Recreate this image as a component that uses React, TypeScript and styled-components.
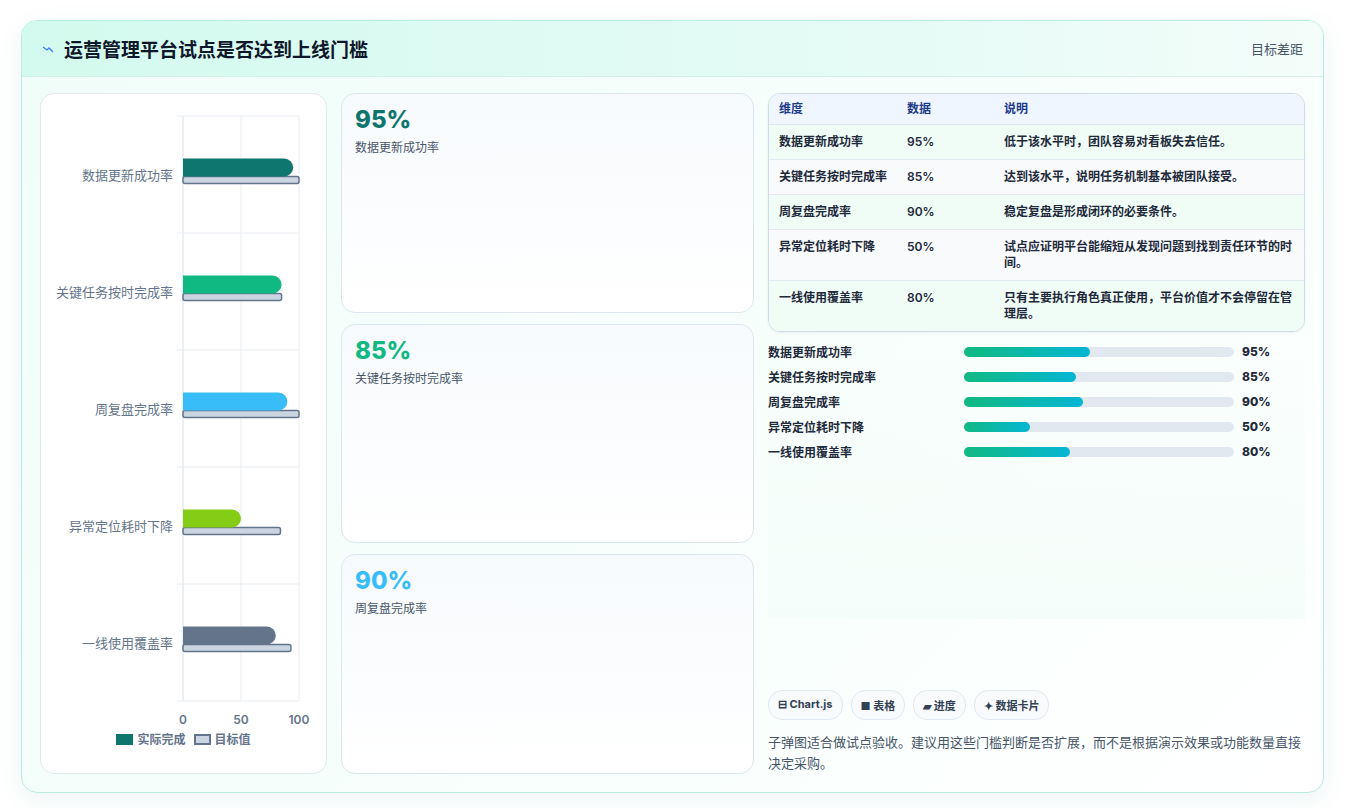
import React from 'react';
import styled, { createGlobalStyle } from 'styled-components';

const GlobalStyle = createGlobalStyle`
  body {
    margin: 0;
    background: #ffffff;
    font-family: Inter, "Noto Sans CJK SC", sans-serif;
  }
`;

interface Metric {
  name: string;
  value: number;
  target: number;
  color: string;
  note: string;
}

const metrics: Metric[] = [
  { name: '数据更新成功率', value: 95, target: 100, color: '#0f766e', note: '低于该水平时，团队容易对看板失去信任。' },
  { name: '关键任务按时完成率', value: 85, target: 85, color: '#10b981', note: '达到该水平，说明任务机制基本被团队接受。' },
  { name: '周复盘完成率', value: 90, target: 100, color: '#38bdf8', note: '稳定复盘是形成闭环的必要条件。' },
  { name: '异常定位耗时下降', value: 50, target: 84, color: '#84cc16', note: '试点应证明平台能缩短从发现问题到找到责任环节的时间。' },
  { name: '一线使用覆盖率', value: 80, target: 93, color: '#64748b', note: '只有主要执行角色真正使用，平台价值才不会停留在管理层。' },
];

const Page = styled.div`
  padding: 20px 21px 17px 21px;
`;

const Frame = styled.div`
  border: 1px solid #b9ece0;
  border-radius: 16px;
  background: linear-gradient(135deg, #effdf8 0%, #f8fffc 60%, #ffffff 100%);
  box-shadow: 0 6px 24px rgba(15, 118, 110, 0.08);
  overflow: hidden;
`;

const Header = styled.div`
  height: 55px;
  display: flex;
  align-items: center;
  justify-content: space-between;
  padding: 0 20px;
  background: linear-gradient(90deg, #d3faee, #e4fbf5 60%, #f3fdfa);
  border-bottom: 1px solid #d3efe7;
`;

const Title = styled.h1`
  margin: 0;
  display: flex;
  align-items: center;
  gap: 10px;
  font-size: 19px;
  font-weight: 700;
  color: #0f172a;
`;

const HeaderLink = styled.span`
  font-size: 13px;
  color: #475569;
`;

const Body = styled.div`
  display: grid;
  grid-template-columns: 287px 413px 1fr;
  gap: 14px;
  padding: 16px 18px 18px 18px;
  height: 681px;
`;

const ChartPanel = styled.div`
  background: #fff;
  border: 1px solid #e2e8f0;
  border-radius: 14px;
  display: flex;
  flex-direction: column;
  align-items: center;
`;

const Legend = styled.div`
  display: flex;
  gap: 8px;
  align-items: center;
  font-size: 12px;
  font-weight: 600;
  color: #64748b;
`;

const Swatch = styled.span<{ $fill: string; $border: string }>`
  width: 17px;
  height: 11px;
  background: ${({ $fill }) => $fill};
  border: 2px solid ${({ $border }) => $border};
  box-sizing: border-box;
  margin-right: 4px;
  display: inline-block;
  vertical-align: -1px;
`;

const Cards = styled.div`
  display: grid;
  grid-template-rows: repeat(3, 1fr);
  gap: 11px;
`;

const Card = styled.div`
  border: 1px solid #dbe7ef;
  border-radius: 14px;
  background: linear-gradient(180deg, #f7fafd, #ffffff);
  padding: 12px 13px;
`;

const BigNum = styled.div<{ $color: string }>`
  font-size: 24px;
  font-weight: 800;
  color: ${({ $color }) => $color};
  line-height: 28px;
`;

const CardLabel = styled.div`
  font-size: 12px;
  color: #475569;
  margin-top: 4px;
`;

const Right = styled.div`
  display: flex;
  flex-direction: column;
`;

const Table = styled.div`
  border: 1px solid #cfdbe6;
  border-radius: 12px;
  overflow: hidden;
  font-size: 12px;
  box-shadow: 0 1px 3px rgba(15, 23, 42, 0.06);
`;

const Row = styled.div<{ $bg: string; $head?: boolean }>`
  display: grid;
  grid-template-columns: 128px 97px 1fr;
  padding: ${({ $head }) => ($head ? '7px 10px' : '9px 10px')};
  background: ${({ $bg }) => $bg};
  border-bottom: 1px solid #e2e8f0;
  line-height: 16px;
  font-weight: ${({ $head }) => ($head ? 700 : 600)};
  color: ${({ $head }) => ($head ? '#1e3a8a' : '#1e293b')};
  &:last-child { border-bottom: none; }
`;

const Bars = styled.div`
  display: flex;
  flex-direction: column;
  gap: 9px;
  margin-top: 11px;
  padding-bottom: 160px;
  background: linear-gradient(180deg, #ffffff00, #f4fdf9);
`;

const BarRow = styled.div`
  display: grid;
  grid-template-columns: 196px 278px 1fr;
  align-items: center;
  font-size: 12px;
  font-weight: 600;
  color: #1e293b;
  height: 16px;
`;

const Track = styled.div`
  height: 10px;
  border-radius: 5px;
  background: #e2e8f0;
  margin-right: 8px;
`;

const Fill = styled.div`
  height: 100%;
  border-radius: 5px;
  background: linear-gradient(90deg, #10b981, #06b6d4);
`;

const Pct = styled.span`
  font-weight: 800;
`;

const Footer = styled.div`
  margin-top: auto;
`;

const Chips = styled.div`
  display: flex;
  gap: 8px;
`;

const Chip = styled.span`
  font-size: 11px;
  font-weight: 700;
  color: #334155;
  border: 1px solid #e2e8f0;
  background: #f8fafc;
  border-radius: 14px;
  padding: 6px 9px;
`;

const Note = styled.p`
  margin: 12px 0 0;
  font-size: 13px;
  line-height: 21px;
  color: #475569;
`;

const BulletChart: React.FC = () => {
  const x0 = 143, w = 116, top = 22, band = 117;
  return (
    <svg width="287" height="636" style={{ fontFamily: 'Inter, "Noto Sans CJK SC", sans-serif' }}>
      {[0, 50, 100].map((t) => (
        <line key={t} x1={x0 + (w * t) / 100} x2={x0 + (w * t) / 100} y1={top} y2={top + band * 5} stroke={t === 0 ? '#d8dee6' : '#e8edf2'} />
      ))}
      {[0, 1, 2, 3, 4, 5].map((i) => (
        <line key={i} x1={x0 - 6} x2={x0 + w} y1={top + band * i} y2={top + band * i} stroke="#e8edf2" />
      ))}
      {metrics.map((m, i) => {
        const cy = top + band * i + band / 2;
        return (
          <g key={m.name}>
            <text x={x0 - 10} y={cy + 5} textAnchor="end" fontSize="13" fill="#64748b">{m.name}</text>
            <rect x={x0} y={cy + 2} width={(w * m.target) / 100} height={7} rx={2} fill="#cbd5e1" stroke="#64748b" strokeWidth={1.5} />
            <path d={`M${x0} ${cy - 16} h${(w * m.value) / 100 - 9} a9 9 0 0 1 9 9 a9 9 0 0 1 -9 9 h-${(w * m.value) / 100 - 9} z`} fill={m.color} />
          </g>
        );
      })}
      {[0, 50, 100].map((t) => (
        <text key={t} x={x0 + (w * t) / 100} y={top + band * 5 + 23} textAnchor="middle" fontSize="12" fontWeight="600" fill="#64748b">{t}</text>
      ))}
    </svg>
  );
};

const App: React.FC = () => (
  <>
    <GlobalStyle />
    <Page>
      <Frame>
        <Header>
          <Title>
            <svg width="12" height="10" viewBox="0 0 12 10"><path d="M1 3 L5 6 L7 4 L11 8" stroke="#3b82f6" strokeWidth="1.3" fill="none" /></svg>
            运营管理平台试点是否达到上线门槛
          </Title>
          <HeaderLink>目标差距</HeaderLink>
        </Header>
        <Body>
          <ChartPanel>
            <BulletChart />
            <Legend>
              <span><Swatch $fill="#0f766e" $border="#0f766e" />实际完成</span>
              <span><Swatch $fill="#cbd5e1" $border="#64748b" />目标值</span>
            </Legend>
          </ChartPanel>
          <Cards>
            {metrics.slice(0, 3).map((m) => (
              <Card key={m.name}>
                <BigNum $color={m.color}>{m.value}%</BigNum>
                <CardLabel>{m.name}</CardLabel>
              </Card>
            ))}
          </Cards>
          <Right>
            <Table>
              <Row $bg="#eff6ff" $head><span>维度</span><span>数据</span><span>说明</span></Row>
              {metrics.map((m, i) => (
                <Row key={m.name} $bg={i % 2 === 0 ? '#f0fdf6' : '#f8fafc'}>
                  <span>{m.name}</span><span>{m.value}%</span><span>{m.note}</span>
                </Row>
              ))}
            </Table>
            <Bars>
              {metrics.map((m) => (
                <BarRow key={m.name}>
                  <span>{m.name}</span>
                  <Track><Fill style={{ width: `${m.value * 0.49}%` }} /></Track>
                  <Pct>{m.value}%</Pct>
                </BarRow>
              ))}
            </Bars>
            <Footer>
              <Chips>
                <Chip>⊟ Chart.js</Chip>
                <Chip>■ 表格</Chip>
                <Chip>▰ 进度</Chip>
                <Chip>✦ 数据卡片</Chip>
              </Chips>
              <Note>子弹图适合做试点验收。建议用这些门槛判断是否扩展，而不是根据演示效果或功能数量直接决定采购。</Note>
            </Footer>
          </Right>
        </Body>
      </Frame>
    </Page>
  </>
);

export default App;
